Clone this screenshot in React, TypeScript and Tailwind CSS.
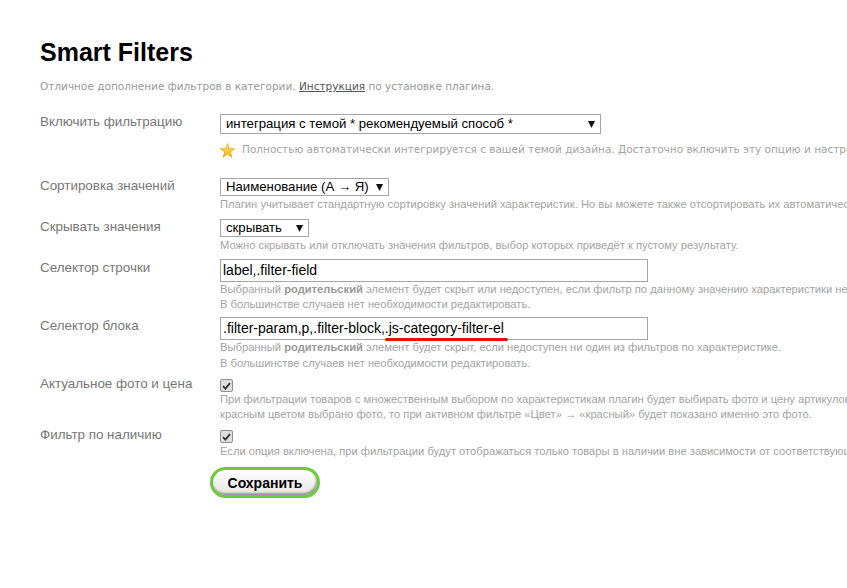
import React from 'react';

const sans = { fontFamily: '"Liberation Sans", Arial, sans-serif' };
const verd = { fontFamily: '"DejaVu Sans", Verdana, sans-serif' };

function Arrow() {
  return (
    <svg width="7" height="7" viewBox="0 0 8 8" className="shrink-0">
      <polygon points="0,0 8,0 4,8" fill="#111" />
    </svg>
  );
}

function FakeSelect({ value, width, height }: { value: string; width: string; height: string }) {
  return (
    <div
      className={`flex items-center justify-between bg-white border border-[#a6a6a6] pl-[5px] pr-[5px] text-[13.2px] text-black ${width} ${height}`}
      style={sans}
    >
      <span className="leading-none">{value}</span>
      <Arrow />
    </div>
  );
}

function Star() {
  return (
    <svg width="15" height="15" viewBox="0 0 24 24" className="shrink-0">
      <defs>
        <linearGradient id="starg" x1="0" y1="0" x2="0" y2="1">
          <stop offset="0" stopColor="#ffe680" />
          <stop offset="1" stopColor="#f2b400" />
        </linearGradient>
      </defs>
      <polygon
        points="12,1 15,9 23.5,9 16.5,14.2 19.2,22.8 12,17.6 4.8,22.8 7.5,14.2 0.5,9 9,9"
        fill="url(#starg)"
        stroke="#d99a00"
        strokeWidth="1"
        strokeLinejoin="round"
      />
    </svg>
  );
}

function Checkbox() {
  return (
    <div className="w-[13px] h-[13px] rounded-[2px] border border-[#8f8f8f] bg-[#dedede] flex items-center justify-center">
      <svg width="9" height="8" viewBox="0 0 9 8">
        <path d="M1 4.2 L3.4 6.6 L8 1.2" fill="none" stroke="#333" strokeWidth="1.8" />
      </svg>
    </div>
  );
}

function Row({ label, labelPt, children, mt }: { label: string; labelPt: string; children: React.ReactNode; mt: string }) {
  return (
    <div className={`flex items-start ${mt}`}>
      <div className={`w-[180px] shrink-0 text-[13.4px] leading-[16px] text-[#777] ${labelPt}`} style={sans}>
        {label}
      </div>
      <div className="flex flex-col">{children}</div>
    </div>
  );
}

function Hint({ children, lh = 'leading-[15px]' }: { children: React.ReactNode; lh?: string }) {
  return <div className={`text-[11.2px] ${lh} text-[#a3a3a3]`} style={sans}>{children}</div>;
}

export default function App() {
  return (
    <div className="w-[847px] h-[588px] bg-white overflow-hidden whitespace-nowrap pl-[40px]" style={sans}>
      <h1 className="mt-[37px] text-[25px] leading-[30px] font-bold text-black">Smart Filters</h1>
      <p className="mt-[12px] text-[10.5px] leading-[14px] text-[#999]" style={verd}>
        Отличное дополнение фильтров в категории. <span className="underline text-[#555]">Инструкция</span> по установке плагина.
      </p>

      <Row label="Включить фильтрацию" labelPt="pt-0" mt="mt-[21px]">
        <FakeSelect value="интеграция с темой * рекомендуемый способ *" width="w-[381px]" height="h-[20px]" />
        <div className="mt-[8px] flex items-center gap-[7px] h-[16px]">
          <Star />
          <span className="text-[10.5px] text-[#a3a3a3]" style={verd}>
            Полностью автоматически интегрируется с вашей темой дизайна. Достаточно включить эту опцию и настроить параметры фильтров.
          </span>
        </div>
      </Row>

      <Row label="Сортировка значений" labelPt="pt-0" mt="mt-[20px]">
        <FakeSelect value="Наименование (А → Я)" width="w-[169px]" height="h-[18px]" />
        <div className="mt-[1px]">
          <Hint>Плагин учитывает стандартную сортировку значений характеристик. Но вы можете также отсортировать их автоматически.</Hint>
        </div>
      </Row>

      <Row label="Скрывать значения" labelPt="pt-0" mt="mt-[7px]">
        <FakeSelect value="скрывать" width="w-[89px]" height="h-[18px]" />
        <div className="mt-[1px]">
          <Hint>Можно скрывать или отключать значения фильтров, выбор которых приведёт к пустому результату.</Hint>
        </div>
      </Row>

      <Row label="Селектор строчки" labelPt="pt-[1px]" mt="mt-[6px]">
        <div className="w-[428px] h-[23px] border border-[#a6a6a6] bg-white pl-[2px] flex items-center text-[14px] text-black">
          label,.filter-field
        </div>
        <Hint>
          Выбранный <b className="text-[#999]">родительский</b> элемент будет скрыт или недоступен, если фильтр по данному значению характеристики не даст результатов.
        </Hint>
        <Hint>В большинстве случаев нет необходимости редактировать.</Hint>
      </Row>

      <Row label="Селектор блока" labelPt="pt-[1px]" mt="mt-[5px]">
        <div className="relative w-[428px] h-[23px] border border-[#a6a6a6] bg-white pl-[2px] flex items-center text-[14px] text-black">
          .filter-param,p,.filter-block,.js-category-filter-el
          <div className="absolute left-[164px] top-[20px] w-[123px] h-[3px] rounded-full bg-[#e8100c]" />
        </div>
        <Hint lh="leading-[15.5px]">
          Выбранный <b className="text-[#999]">родительский</b> элемент будет скрыт, если недоступен ни один из фильтров по характеристике.
        </Hint>
        <Hint lh="leading-[15.5px]">В большинстве случаев нет необходимости редактировать.</Hint>
      </Row>

      <Row label="Актуальное фото и цена" labelPt="pt-0" mt="mt-[5px]">
        <div className="h-[16px] pt-[3px]">
          <Checkbox />
        </div>
        <Hint>При фильтрации товаров с множественным выбором по характеристикам плагин будет выбирать фото и цену артикулов, соответствующих фильтру. Например, если для артикула с</Hint>
        <Hint>красным цветом выбрано фото, то при активном фильтре «Цвет» → «красный» будет показано именно это фото.</Hint>
      </Row>

      <Row label="Фильтр по наличию" labelPt="pt-0" mt="mt-[5px]">
        <div className="h-[17px] pt-[3px]">
          <Checkbox />
        </div>
        <Hint>Если опция включена, при фильтрации будут отображаться только товары в наличии вне зависимости от соответствующих характеристик.</Hint>
      </Row>

      <div className="pl-[170px] mt-[8px]">
        <button
          className="w-[110px] h-[31px] rounded-full border-[3px] border-[#6ccb3a] bg-gradient-to-b from-white to-[#e4e4e4] shadow-[inset_-1px_-2px_2px_rgba(0,0,0,0.35)] text-[14px] font-bold text-black leading-none"
          style={sans}
        >
          Сохранить
        </button>
      </div>
    </div>
  );
}
